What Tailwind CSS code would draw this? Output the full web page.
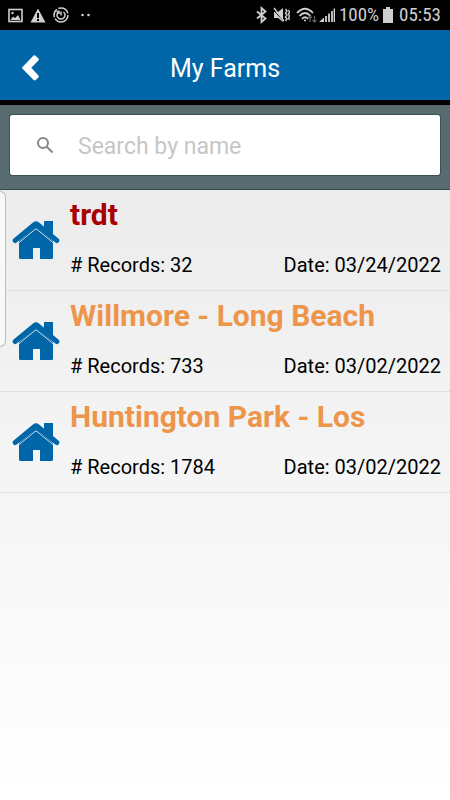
<!DOCTYPE html>
<html lang="en">
  <head>
    <meta charset="UTF-8" />
    <meta name="viewport" content="width=device-width, initial-scale=1.0" />
    <title>My Farms</title>
    <script src="https://cdn.jsdelivr.net/npm/@tailwindcss/browser@4"></script>
  </head>
  <body class="min-h-screen flex flex-col bg-black font-['Roboto',sans-serif] text-black">
    <!-- House icon shared by the rows -->
    <svg class="hidden" aria-hidden="true">
      <symbol id="house" viewBox="0 0 48 40">
        <path d="M7 21 24 7l17 14v16.500q0 1.500-1.500 1.500H28V28h-7v11H8.500Q7 39 7 37.500z" />
        <path d="M32 1h9v15l-9-7z" />
        <path d="M1 19 21 2.500q3-2.500 6 0L47 19q1 1.500 0 3t-3 1L24 7.500 4 23q-2 .5-3-1t0-3z" />
        <path d="M6 23.500 23 9.500q1-.8 2 0l17 14" fill="none" stroke="#c5dcec" stroke-width="1" />
      </symbol>
    </svg>

    <!-- Status bar -->
    <div class="h-[30px] shrink-0 flex items-center justify-between pl-2 pr-[9px] text-[#cfcfcf]">
      <div class="flex items-center gap-[7px]">
        <svg class="w-[15px] h-[15px]" viewBox="0 0 15 15" fill="none" stroke="currentColor" stroke-width="1.600">
          <rect x="1" y="1.500" width="13" height="12" />
          <path d="M2.500 12 5 8.500l2 1.500 3-3 2.500 5z" fill="currentColor" stroke="none" />
          <circle cx="4.500" cy="5" r="1.200" fill="currentColor" stroke="none" />
        </svg>
        <svg class="w-4 h-[15px]" viewBox="0 0 16 15">
          <path d="M8 .5 15.500 14.500H.5z" fill="currentColor" />
          <path d="M8 5v5M8 11v2" stroke="#000" stroke-width="2" />
        </svg>
        <svg class="w-4 h-4" viewBox="0 0 16 16" fill="none" stroke="currentColor" stroke-width="1.500">
          <circle cx="8" cy="8" r="7" stroke-dasharray="18 1.500 9 1.500 12 2" />
          <path d="M5.500 5A4 4 0 1 0 10.500 5M8 8.500V4.500M3.500 4.500h2.500V7" />
        </svg>
        <svg class="ml-1 w-3 h-4" viewBox="0 0 12 16" fill="currentColor">
          <circle cx="2.500" cy="8" r="1.300" />
          <circle cx="8.500" cy="8" r="1.300" />
        </svg>
      </div>
      <div class="flex items-center text-[19px] leading-5">
        <svg class="mr-1.5 w-[11px] h-[18px]" viewBox="0 0 11 18" fill="none" stroke="currentColor" stroke-width="1.800">
          <path d="M1 5.500 9.500 12.500 5.500 16V2l4 3.500L1 12.500" />
        </svg>
        <svg class="mr-1.5 w-[17px] h-4" viewBox="0 0 17 16">
          <path d="M1 5h4l5-4v14l-5-4H1z" fill="currentColor" />
          <path d="M0 2.500l11 12" stroke="#000" stroke-width="1" />
          <path d="M1 1l10 13M12.500 2l1.500 2-1.500 2L14 8l-1.500 2 1.500 2-1.500 2M15.500 3l1 2-1 2 1 2-1 2 1 2" fill="none" stroke="currentColor" stroke-width="1.400" />
        </svg>
        <svg class="mr-0.5 w-[21px] h-4" viewBox="0 0 21 16" fill="none" stroke="currentColor" stroke-width="1.800">
          <path d="M1 6q8-8.500 16 0M3.500 9q5.500-6 11 0M6 12q3-3.500 6 0" />
          <circle cx="9" cy="13.500" r="1" fill="currentColor" stroke="none" />
          <path d="M14 15V9m-2 2 2-2 2 2M18.500 9v6m-2-2 2 2 2-2" stroke="#666" stroke-width="1.200" />
        </svg>
        <svg class="mr-1 w-4 h-4" viewBox="0 0 16 16" fill="none" stroke="currentColor" stroke-width="2">
          <path d="M0 15 5 10.500V15z" fill="currentColor" stroke="none" />
          <path d="M7 15V9M10 15V6.500M13 15V4M15.500 15V1.500" stroke-width="1.800" />
        </svg>
        <span class="mr-1 font-['Roboto_Condensed','Roboto',sans-serif]">100%</span>
        <svg class="mr-1.5 w-2.5 h-4" viewBox="0 0 10 16" fill="currentColor">
          <path d="M3 0h4v2h3v14H0V2h3z" />
        </svg>
        <span class="font-['Roboto_Condensed','Roboto',sans-serif]">05:53</span>
      </div>
    </div>

    <!-- Title bar -->
    <header class="h-[70px] shrink-0 grid grid-cols-[60px_1fr_60px] items-center bg-[#0066a8] text-white">
      <button type="button" aria-label="Back" class="h-full flex items-center pl-[22px] pt-1.5">
        <svg class="w-[18px] h-[26px]" viewBox="0 0 18 26" fill="currentColor">
          <path d="M.3 12.300 11.500.6q1-.8 2 .1l3 2.800q.8 1-.1 2L9.300 12.800l7.100 7.700q.8 1 0 2l-2.700 2.600q-1 .8-2.100 0L.3 13.500q-.5-.6 0-1.200z" />
        </svg>
      </button>
      <h1 class="pt-2 text-center text-[25px] leading-8">My Farms</h1>
    </header>

    <!-- Search -->
    <div class="mt-[5px] px-2.5 pt-2.5 pb-[14px] bg-[#586c70] border-b border-[#2f474d]">
      <label class="h-[60px] flex items-center gap-6 pl-[26px] pr-3 bg-white rounded-xs outline outline-[#2f474d]/70">
        <svg class="w-[18px] h-[18px] shrink-0" viewBox="0 0 18 18" fill="none" stroke="#858585" stroke-width="2">
          <circle cx="7" cy="7" r="5" />
          <path d="m10.500 10.500 6 6" />
        </svg>
        <input type="text" aria-label="Search by name" placeholder="Search by name" class="min-w-0 flex-1 pt-1 text-[23px] leading-8 placeholder:text-[#c6c6c6] outline-none" />
      </label>
    </div>

    <!-- Farm list -->
    <main class="relative flex-1 bg-linear-to-b from-[#ececec] to-white">
      <div class="absolute left-0 top-px w-1.5 h-[156px] rounded-r-md border border-l-0 border-[#bdbdbd] bg-[#f8f8f8]"></div>
      <ul>
        <li class="border-b border-[#dedede]">
          <a href="#" class="h-[100px] flex items-center gap-2.5 pl-3 pr-[9px]">
            <svg class="w-12 h-10 shrink-0 fill-[#0066a8]"><use href="#house" /></svg>
            <div class="flex-1 min-w-0 pb-1.5">
              <h2 class="text-[30px] leading-9 font-bold text-[#a80000]">trdt</h2>
              <p class="mt-5 flex justify-between text-[20px] leading-6">
                <span># Records: 32</span><span>Date: 03/24/2022</span>
              </p>
            </div>
          </a>
        </li>
        <li class="border-b border-[#dedede]">
          <a href="#" class="h-[100px] flex items-center gap-2.5 pl-3 pr-[9px]">
            <svg class="w-12 h-10 shrink-0 fill-[#0066a8]"><use href="#house" /></svg>
            <div class="flex-1 min-w-0 pb-1.5">
              <h2 class="text-[30px] leading-9 font-bold text-[#ee954c]">Willmore - Long Beach</h2>
              <p class="mt-5 flex justify-between text-[20px] leading-6">
                <span># Records: 733</span><span>Date: 03/02/2022</span>
              </p>
            </div>
          </a>
        </li>
        <li class="border-b border-[#dedede]">
          <a href="#" class="h-[100px] flex items-center gap-2.5 pl-3 pr-[9px]">
            <svg class="w-12 h-10 shrink-0 fill-[#0066a8]"><use href="#house" /></svg>
            <div class="flex-1 min-w-0 pb-1.5">
              <h2 class="text-[30px] leading-9 font-bold text-[#ee954c]">Huntington Park - Los</h2>
              <p class="mt-5 flex justify-between text-[20px] leading-6">
                <span># Records: 1784</span><span>Date: 03/02/2022</span>
              </p>
            </div>
          </a>
        </li>
      </ul>
    </main>
  </body>
</html>
